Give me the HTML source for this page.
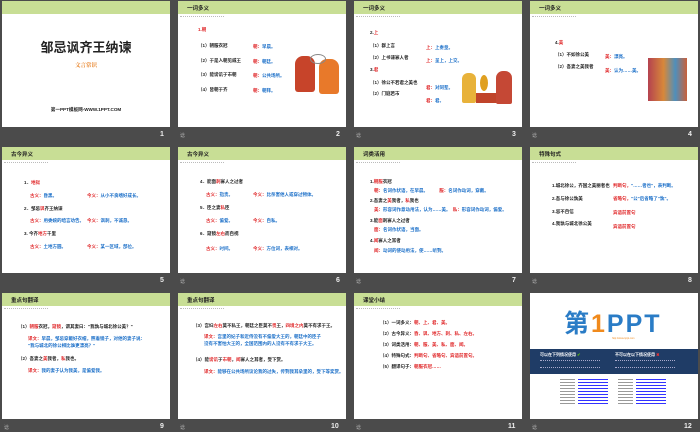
<html><head><style>
body{margin:0;width:700px;height:432px;background:#4b4b4b;position:relative;overflow:hidden;font-family:"Liberation Sans","Noto Sans CJK SC",sans-serif}
.s{position:absolute;width:168px;height:126px;background:#fff;overflow:hidden}
.h{position:absolute;left:0;top:0;width:168px;height:13px;background:#c8de95}
.h b{position:absolute;left:9px;top:3px;font-size:5.5px;color:#222}
.d{position:absolute;left:2px;top:15px;width:44px;border-top:1px dotted #bbb}
.t{position:absolute;font-size:4.5px;color:#222;white-space:nowrap;line-height:5px;font-weight:bold}
.r{color:#e0282a}.bl{color:#1b6fc8}
.n{position:absolute;color:#eee;font-size:7px;font-weight:bold}
.i{position:absolute;color:#bbb;font-size:5px}
</style></head><body>
<!-- row1 -->
<div class="s" style="left:2px;top:1px">
<div style="position:absolute;left:0;top:0;width:168px;height:13px;background:#c8de95"></div>
<div style="position:absolute;left:0;width:168px;top:36px;text-align:center;font-size:13px;font-weight:bold;color:#222">邹忌讽齐王纳谏</div>
<div style="position:absolute;left:0;width:168px;top:60px;text-align:center;font-size:5.5px;color:#e8842a;font-family:'Noto Serif CJK SC',serif;font-weight:bold">文言常识</div>
<div style="position:absolute;left:0;width:168px;top:106px;text-align:center;font-size:4.6px;font-weight:bold;color:#222">第一PPT模板网-WWW.1PPT.COM</div>
</div>
<div class="s" style="left:178px;top:1px"><div class="h"><b>一词多义</b></div><div class="d"></div>
<div class="t r" style="left:20px;top:26px">1.朝</div>
<div class="t" style="left:20px;top:42px">（1）朝服衣冠</div><div class="t" style="left:75px;top:43px"><span class="r">朝：</span><span class="bl">早晨。</span></div>
<div class="t" style="left:20px;top:57px">（2）于是入朝见威王</div><div class="t" style="left:75px;top:58px"><span class="r">朝：</span><span class="bl">朝廷。</span></div>
<div class="t" style="left:20px;top:71px">（3）能谤讥于市朝</div><div class="t" style="left:75px;top:72px"><span class="r">朝：</span><span class="bl">公共场所。</span></div>
<div class="t" style="left:20px;top:86px">（4）皆朝于齐</div><div class="t" style="left:75px;top:87px"><span class="r">朝：</span><span class="bl">朝拜。</span></div>
<div style="position:absolute;left:117px;top:55px;width:20px;height:36px;background:#c7442a;border-radius:8px 8px 3px 3px"></div>
<div style="position:absolute;left:141px;top:58px;width:20px;height:35px;background:#e8792a;border-radius:8px 8px 3px 3px"></div>
<div style="position:absolute;left:132px;top:53px;width:14px;height:8px;border:1px solid #888;border-radius:50%"></div>
</div>
<div class="s" style="left:354px;top:1px"><div class="h"><b>一词多义</b></div><div class="d"></div>
<div class="t" style="left:16px;top:29px">2.<span class="r">上</span></div>
<div class="t" style="left:16px;top:42px">（1）群上言</div><div class="t" style="left:72px;top:44px"><span class="r">上：</span><span class="bl">上奏章。</span></div>
<div class="t" style="left:16px;top:54px">（2）上书谏寡人者</div><div class="t" style="left:72px;top:57px"><span class="r">上：</span><span class="bl">呈上，上交。</span></div>
<div class="t" style="left:16px;top:66px">3.<span class="r">君</span></div>
<div class="t" style="left:16px;top:79px">（1）徐公不若君之美也</div><div class="t" style="left:72px;top:84px"><span class="r">君：</span><span class="bl">对同辈。</span></div>
<div class="t" style="left:16px;top:90px">（2）门庭若市</div><div class="t" style="left:72px;top:97px"><span class="r">君：</span><span class="bl">君。</span></div>
<div style="position:absolute;left:108px;top:72px;width:14px;height:30px;background:#e8b23a;border-radius:6px 6px 2px 2px"></div>
<div style="position:absolute;left:126px;top:74px;width:8px;height:16px;background:#e0a020;border-radius:50%"></div>
<div style="position:absolute;left:122px;top:92px;width:22px;height:10px;background:#c0442a"></div>
<div style="position:absolute;left:142px;top:70px;width:16px;height:33px;background:#c54835;border-radius:7px 7px 2px 2px"></div>
</div>
<div class="s" style="left:530px;top:1px"><div class="h"><b>一词多义</b></div><div class="d"></div>
<div class="t" style="left:25px;top:39px">4.<span class="r">美</span></div>
<div class="t" style="left:25px;top:51px">（1）不如徐公美</div><div class="t" style="left:75px;top:53px"><span class="r">美：</span><span class="bl">漂亮。</span></div>
<div class="t" style="left:25px;top:63px">（2）吾妻之美我者</div><div class="t" style="left:75px;top:67px"><span class="r">美：</span><span class="bl">认为……美。</span></div>
<div style="position:absolute;left:118px;top:57px;width:39px;height:43px;background:linear-gradient(90deg,#b5424f,#d7883a 40%,#4f8fbb 70%,#c9603b)"></div>
</div>
<div class="n" style="left:160px;top:131px">1</div>
<div class="i" style="left:180px;top:132px">谂</div><div class="n" style="left:336px;top:131px">2</div>
<div class="i" style="left:356px;top:132px">谂</div><div class="n" style="left:512px;top:131px">3</div>
<div class="i" style="left:532px;top:132px">谂</div><div class="n" style="left:688px;top:131px">4</div>
<!-- row2 -->
<div class="s" style="left:2px;top:147px"><div class="h"><b>古今异义</b></div><div class="d"></div>
<div class="t" style="left:22px;top:33px">1．<span class="r">地狱</span></div>
<div class="t" style="left:28px;top:46px"><span class="r">古义：</span><span class="bl">昏黑。</span></div><div class="t" style="left:85px;top:46px"><span class="r">今义：</span><span class="bl">从小不良嗜好成长。</span></div>
<div class="t" style="left:22px;top:59px">2．邹忌<span class="r">讽</span>齐王纳谏</div>
<div class="t" style="left:28px;top:71px"><span class="r">古义：</span><span class="bl">用委婉的暗言劝告。</span></div><div class="t" style="left:85px;top:71px"><span class="r">今义：</span><span class="bl">讽刺，不诚恳。</span></div>
<div class="t" style="left:22px;top:84px">3. 今齐<span class="r">地方</span>千里</div>
<div class="t" style="left:28px;top:97px"><span class="r">古义：</span><span class="bl">土地方圆。</span></div><div class="t" style="left:85px;top:97px"><span class="r">今义：</span><span class="bl">某一区域，部位。</span></div>
</div>
<div class="s" style="left:178px;top:147px"><div class="h"><b>古今异义</b></div><div class="d"></div>
<div class="t" style="left:22px;top:32px">4．能面<span class="r">刺</span>寡人之过者</div>
<div class="t" style="left:28px;top:45px"><span class="r">古义：</span><span class="bl">指责。</span></div><div class="t" style="left:75px;top:45px"><span class="r">今义：</span><span class="bl">比杀害他人或穿过物体。</span></div>
<div class="t" style="left:22px;top:58px">5．臣之妻<span class="r">私</span>臣</div>
<div class="t" style="left:28px;top:71px"><span class="r">古义：</span><span class="bl">偏爱。</span></div><div class="t" style="left:75px;top:71px"><span class="r">今义：</span><span class="bl">自私。</span></div>
<div class="t" style="left:22px;top:84px">6．窥镜<span class="r">左右</span>而自视</div>
<div class="t" style="left:28px;top:99px"><span class="r">古义：</span><span class="bl">时间。</span></div><div class="t" style="left:75px;top:99px"><span class="r">今义：</span><span class="bl">方位词，表相对。</span></div>
</div>
<div class="s" style="left:354px;top:147px"><div class="h"><b>词类活用</b></div><div class="d"></div>
<div class="t" style="left:16px;top:32px">1.<span class="r">朝服</span>衣冠</div>
<div class="t" style="left:20px;top:41px"><span class="r">朝：</span><span class="bl">名词作状语，在早晨。</span>　　　<span class="r">服：</span><span class="bl">名词作动词，穿戴。</span></div>
<div class="t" style="left:16px;top:51px">2.吾妻之<span class="r">美</span>我者，<span class="r">私</span>我也</div>
<div class="t" style="left:20px;top:60px"><span class="r">美：</span><span class="bl">形容词作意动用法，认为……美。</span>　<span class="r">私：</span><span class="bl">形容词作动词，偏爱。</span></div>
<div class="t" style="left:16px;top:71px">3.能<span class="r">面</span>刺寡人之过者</div>
<div class="t" style="left:20px;top:80px"><span class="r">面：</span><span class="bl">名词作状语，当面。</span></div>
<div class="t" style="left:16px;top:91px">4.<span class="r">闻</span>寡人之耳者</div>
<div class="t" style="left:20px;top:101px"><span class="r">闻：</span><span class="bl">动词的使动用法，使……听到。</span></div>
</div>
<div class="s" style="left:530px;top:147px"><div class="h"><b>特殊句式</b></div><div class="d"></div>
<div class="t" style="left:22px;top:36px">1.城北徐公，齐国之美丽者也</div><div class="t" style="left:83px;top:36px"><span class="r">判断句，</span><span class="bl">"……者也"，表判断。</span></div>
<div class="t" style="left:22px;top:49px">2.吾与徐公孰美</div><div class="t" style="left:83px;top:49px"><span class="r">省略句，</span><span class="bl">"公"后省略了"孰"。</span></div>
<div class="t" style="left:22px;top:62px">3.忌不自信</div><div class="t" style="left:83px;top:63px" ><span class="r">宾语前置句</span></div>
<div class="t" style="left:22px;top:74px">4.我孰与城北徐公美</div><div class="t" style="left:83px;top:77px"><span class="r">宾语前置句</span></div>
</div>
<div class="n" style="left:160px;top:277px">5</div>
<div class="i" style="left:180px;top:278px">谂</div><div class="n" style="left:336px;top:277px">6</div>
<div class="i" style="left:356px;top:278px">谂</div><div class="n" style="left:512px;top:277px">7</div>
<div class="i" style="left:532px;top:278px">谂</div><div class="n" style="left:688px;top:277px">8</div>
<!-- row3 -->
<div class="s" style="left:2px;top:293px"><div class="h"><b>重点句翻译</b></div><div class="d"></div>
<div class="t" style="left:16px;top:31px">（1）<span class="r">朝服</span>衣冠，<span class="r">窥镜</span>，谓其妻曰："我孰与城北徐公美？"</div>
<div class="t" style="left:26px;top:43px"><span class="r">译文：</span><span class="bl">早晨，邹忌穿戴好衣帽，照着镜子，对他的妻子说：</span></div>
<div class="t" style="left:26px;top:50px"><span class="bl">"我与城北的徐公相比谁更漂亮？"</span></div>
<div class="t" style="left:16px;top:63px">（2）吾妻之<span class="r">美</span>我者，<span class="r">私</span>我也。</div>
<div class="t" style="left:26px;top:75px"><span class="r">译文：</span><span class="bl">我的妻子认为我美，是偏爱我。</span></div>
</div>
<div class="s" style="left:178px;top:293px"><div class="h"><b>重点句翻译</b></div><div class="d"></div>
<div class="t" style="left:15px;top:30px">（3）宫妇<span class="r">左右</span>莫不私王，朝廷之臣莫不<span class="r">畏</span>王，<span class="r">四境之内</span>莫不有求于王。</div>
<div class="t" style="left:26px;top:41px"><span class="r">译文：</span><span class="bl">宫里的妃子和近侍没有不偏爱大王的，朝廷中的臣子</span></div>
<div class="t" style="left:26px;top:48px"><span class="bl">没有不害怕大王的，全国范围内的人没有不有求于大王。</span></div>
<div class="t" style="left:15px;top:64px">（4）能<span class="r">谤讥</span>于<span class="r">市朝</span>，<span class="r">闻</span>寡人之耳者，受下赏。</div>
<div class="t" style="left:26px;top:76px"><span class="r">译文：</span><span class="bl">能够在公共场所议论我的过失，传到我耳朵里的，受下等奖赏。</span></div>
</div>
<div class="s" style="left:354px;top:293px"><div class="h"><b>课堂小结</b></div><div class="d"></div>
<div class="t" style="left:26px;top:27px">（1）一词多义：<span class="r">朝、上、君、美。</span></div>
<div class="t" style="left:26px;top:38px">（2）古今异义：<span class="r">昏、讽、地方、刺、私、左右。</span></div>
<div class="t" style="left:26px;top:49px">（3）词类活用：<span class="r">朝、服、美、私、面、闻。</span></div>
<div class="t" style="left:26px;top:60px">（4）特殊句式：<span class="r">判断句、省略句、宾语前置句。</span></div>
<div class="t" style="left:26px;top:71px">（5）翻译句子：<span class="r">朝服衣冠……</span></div>
</div>
<div class="s" style="left:530px;top:293px">
<div style="position:absolute;left:34px;top:17px;font-size:25px;font-weight:bold;color:#2a7cc6;letter-spacing:2px;line-height:28px">第<span style="color:#f08a1c">1</span>PPT</div>
<div style="position:absolute;left:82px;top:44px;font-size:2.5px;color:#f08a1c">http://www.1ppt.com</div>
<div style="position:absolute;left:0;top:56px;width:168px;height:25px;background:#1f3c66"></div>
<div class="t" style="left:10px;top:59px;color:#fff;font-size:4px">可以在下列情况使用 <span style="color:#6c0">✔</span></div>
<div class="t" style="left:85px;top:59px;color:#fff;font-size:4px">不可以在以下情况使用 <span style="color:#e33">✖</span></div>
<div style="position:absolute;left:10px;top:67px;width:60px;height:6px;border-top:1px dotted #aac;border-bottom:1px dotted #aac"></div>
<div style="position:absolute;left:85px;top:67px;width:60px;height:6px;border-top:1px dotted #aac;border-bottom:1px dotted #aac"></div>
<div style="position:absolute;left:30px;top:86px;width:15px;height:25px;background:repeating-linear-gradient(#999 0 1px,#fff 1px 3px)"></div>
<div style="position:absolute;left:48px;top:86px;width:30px;height:25px;background:repeating-linear-gradient(#33f 0 1px,#fff 1px 3px)"></div>
<div style="position:absolute;left:88px;top:86px;width:15px;height:25px;background:repeating-linear-gradient(#999 0 1px,#fff 1px 3px)"></div>
<div style="position:absolute;left:106px;top:86px;width:30px;height:25px;background:repeating-linear-gradient(#33f 0 1px,#fff 1px 3px)"></div>
</div>
<div class="i" style="left:4px;top:424px">谂</div><div class="n" style="left:160px;top:423px">9</div>
<div class="i" style="left:180px;top:424px">谂</div><div class="n" style="left:331px;top:423px">10</div>
<div class="i" style="left:356px;top:424px">谂</div><div class="n" style="left:508px;top:423px">11</div>
<div class="i" style="left:532px;top:424px">谂</div><div class="n" style="left:684px;top:423px">12</div>
</body></html>
